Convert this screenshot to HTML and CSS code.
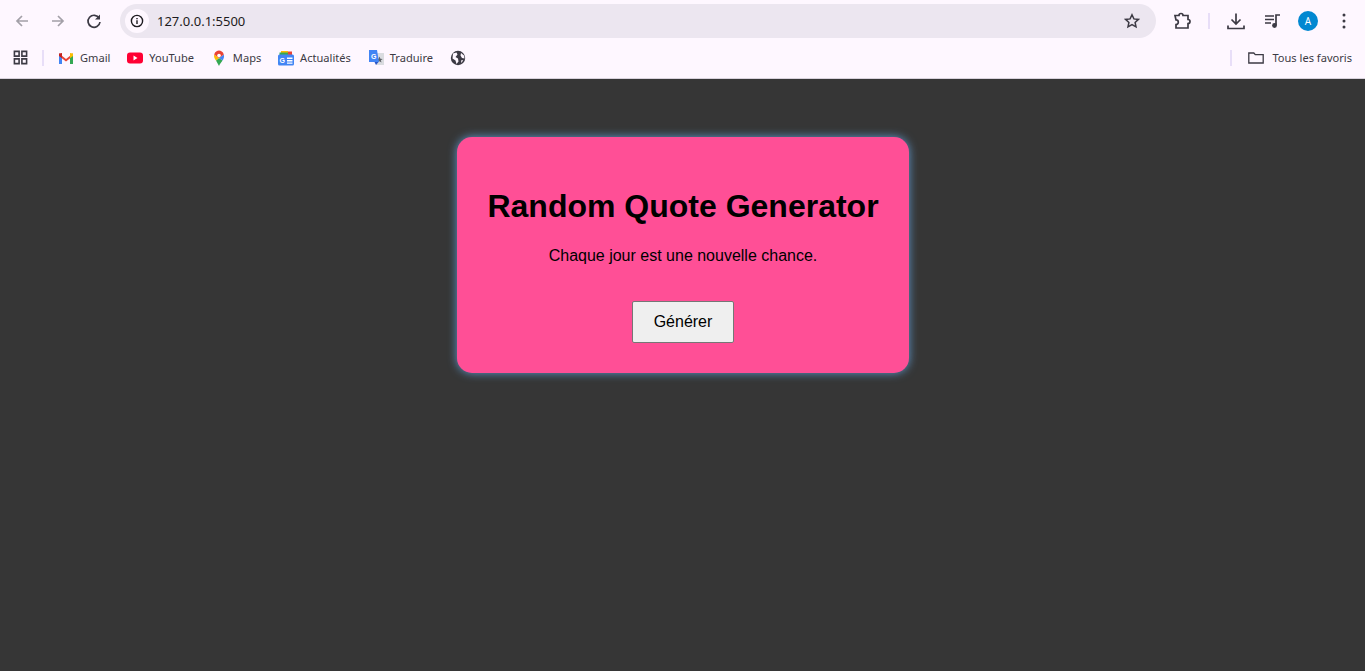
FILE: index.html
```html
<!DOCTYPE html>
<html lang="fr">
<head>
<meta charset="utf-8">
<title>Random Quote Generator</title>
<link rel="stylesheet" href="styles.css">
</head>
<body>
<header class="chrome">
  <div class="toolbar">
    <div class="nav">
      <svg class="ic dim" viewBox="0 0 16 16"><path d="M14 8H3M8 3 3 8l5 5"/></svg>
      <svg class="ic dim" viewBox="0 0 16 16"><path d="M2 8h11M8 3l5 5-5 5"/></svg>
      <svg class="ic" viewBox="0 0 16 16"><path d="M13.2 5.2A6 6 0 1 0 14 9"/><path class="fill" d="M14 1.5v5H9z"/></svg>
    </div>
    <div class="omnibox">
      <span class="site-info"><svg viewBox="0 0 14 14"><circle cx="7" cy="7" r="5.6"/><path d="M7 6.3v3.6M7 4v1.2"/></svg></span>
      <span class="url">127.0.0.1:5500</span>
      <svg class="star" viewBox="0 0 16 16"><path d="m8 1.8 1.9 4.1 4.5.5-3.3 3 .9 4.5L8 11.6l-4 2.3.9-4.5-3.3-3 4.5-.5z"/></svg>
    </div>
    <div class="actions">
      <svg class="ic puzzle" viewBox="0 0 18 18"><path d="M2 3.500h4a2 2 0 0 1 4 0h5v4a2 2 0 0 1 0 4v4.500H3v-3.500a2.300 2.300 0 0 0 0-4.600z"/></svg>
      <i class="sep"></i>
      <svg class="ic download" viewBox="0 0 18 18"><path d="M9 1.500v10M4.500 7.500 9 12l4.500-4.500M1 13.500v3h16v-3"/></svg>
      <svg class="ic media" viewBox="0 0 18 18"><path d="M1 4h9M1 7.500h9M1 11h6M12 13V3h4"/><circle class="fill" cx="10.500" cy="13.500" r="2.400"/></svg>
      <span class="avatar">A</span>
      <svg class="kebab" viewBox="0 0 4 16"><circle cx="2" cy="2" r="1.500"/><circle cx="2" cy="8" r="1.500"/><circle cx="2" cy="14" r="1.500"/></svg>
    </div>
  </div>
  <nav class="bookmarks">
    <svg class="apps" viewBox="0 0 16 16"><path d="M1.500 1.500h5v5h-5zM9.500 1.500h5v5h-5zM1.500 9.500h5v5h-5zM9.500 9.500h5v5h-5z"/></svg>
    <i class="sep first"></i>
    <a class="bm"><svg viewBox="0 0 16 16"><path fill="#ea4335" d="M1 3.500 8 9l7-5.500V6L8 11.500 1 6z"/><path fill="#4285f4" d="M1 3.500V14h3V6z"/><path fill="#34a853" d="M15 3.500V14h-3V6z"/><path fill="#fbbc04" d="M12 3l3 .5V6l-3 2.300z"/><path fill="#c5221f" d="M4 3 1 3.500V6l3 2.300z"/></svg>Gmail</a>
    <a class="bm"><svg viewBox="0 0 16 16"><rect y="2.500" width="16" height="11" rx="3" fill="#ff0033"/><path fill="#fff" d="m6.500 5.500 4 2.500-4 2.500z"/></svg>YouTube</a>
    <a class="bm"><svg viewBox="0 0 16 16"><path fill="#34a853" d="M5 10.500 8 16c1-2.500 2.500-3.700 3.500-5.500L8 8z"/><path fill="#fbbc04" d="M3.200 4.500C2.500 7 3.800 8.800 5 10.500L8 8z"/><path fill="#4285f4" d="M12.800 4.500 8 8l3.500 2.500c1.200-1.700 2-3.800 1.300-6z"/><path fill="#ea4335" d="M3.200 4.500 8 8l4.800-3.500C12 1.500 9.800.5 8 .5S4 1.500 3.200 4.500z"/><circle cx="8" cy="5.500" r="1.800" fill="#fff"/></svg>Maps</a>
    <a class="bm"><svg viewBox="0 0 16 16"><path fill="#fbbc04" d="M3 1h7v3H3z"/><path fill="#34a853" d="M1.500 2.500h9V6h-9z"/><path fill="#ea4335" d="M10 1.500h4V6h-4z"/><rect y="4.500" width="16" height="11" rx="1.500" fill="#4285f4"/><text class="gnews" x="1.500" y="13">G</text><path fill="#fff" d="M9 7.500h5.500v1.400H9zM9 10h5.500v1.400H9zM9 12.500h5.500v1.200H9z"/></svg>Actualités</a>
    <a class="bm"><svg viewBox="0 0 16 16"><path fill="#dadce0" d="M6 3h10v12H8z"/><path fill="#5f6368" d="m11.500 6.500.9 2.200 2.300.2-1.800 1.400.6 2.200-2-1.200-2 1.200.6-2.200-1.800-1.400 2.300-.2z"/><path fill="#4285f4" d="M1 0h8l2 12H1z"/><path fill="#2a56c6" d="m6.500 12 1.500 3 2.500-3z"/><text class="gnews" x="3" y="9">G</text></svg>Traduire</a>
    <a class="bm globe-only"><svg viewBox="0 0 16 16"><circle cx="8" cy="8" r="7.200" fill="#3c3a44"/><path fill="#fef7ff" d="M3 3.500 6.500 2.500l1 2-2 2.500 2.500 1.500.5 3-2 2.500-1-3.500-3-2zM11 3l3 2.500.5 3-2.500-.5-1.500-2.500zM11 10.500l2.200-.5-1.700 3z"/></svg></a>
    <i class="sep last"></i>
    <a class="bm folder"><svg viewBox="0 0 16 16"><path d="M.8 13V3h5l1.500 1.700h7.900V13z"/></svg>Tous les favoris</a>
  </nav>
</header>
<main class="page">
  <section class="card">
    <h1>Random Quote Generator</h1>
    <p>Chaque jour est une nouvelle chance.</p>
    <button type="button">Générer</button>
  </section>
</main>
</body>
</html>
```
FILE: styles.css
```css
* { box-sizing: border-box; }
html, body { height: 100%; }
body {
  margin: 0;
  display: flex;
  flex-direction: column;
  overflow: hidden;
  font-family: "Liberation Sans", Arial, sans-serif;
  background: #363636;
}
.chrome {
  height: 79px;
  flex: none;
  background: #fef7ff;
  font-family: "Noto Sans", sans-serif;
  color: #3c3a44;
}
.toolbar {
  height: 42px;
  display: flex;
  align-items: center;
}
.ic {
  width: 16px;
  height: 16px;
  fill: none;
  stroke: #3c3a44;
  stroke-width: 1.7;
  flex: none;
}
.ic .fill { fill: #3c3a44; stroke: none; }
.ic.dim { stroke: #a3a0a8; }
.nav {
  width: 120px;
  padding-left: 14px;
  display: flex;
  gap: 20px;
  flex: none;
}
.omnibox {
  width: 1036px;
  height: 34px;
  border-radius: 17px;
  background: #ece6f0;
  display: flex;
  align-items: center;
  padding: 0 16px 0 5px;
  flex: none;
}
.site-info {
  width: 24px;
  height: 24px;
  border-radius: 50%;
  background: #fef7ff;
  display: flex;
  align-items: center;
  justify-content: center;
}
.site-info svg {
  width: 14px;
  height: 14px;
  fill: none;
  stroke: #1d1b20;
  stroke-width: 1.4;
}
.url {
  margin-left: 8px;
  font-size: 13px;
  color: #1d1b20;
  flex: 1;
}
.star {
  width: 16px;
  height: 16px;
  fill: none;
  stroke: #3c3a44;
  stroke-width: 1.5;
}
.actions {
  flex: 1;
  display: flex;
  align-items: center;
  padding-left: 17px;
}
.puzzle { width: 18px; height: 18px; }
.sep {
  display: block;
  width: 2px;
  height: 16px;
  background: #e8def8;
  flex: none;
}
.actions .sep { margin: 0 17px 0 17px; }
.download { width: 18px; height: 18px; }
.media { width: 18px; height: 18px; margin-left: 19px; }
.avatar {
  width: 20px;
  height: 20px;
  margin-left: 16px;
  border-radius: 50%;
  background: #0288d1;
  color: #fff;
  font-size: 10px;
  display: flex;
  align-items: center;
  justify-content: center;
  flex: none;
}
.kebab {
  width: 4px;
  height: 16px;
  margin-left: 24px;
  fill: #3c3a44;
  flex: none;
}
.bookmarks {
  height: 37px;
  display: flex;
  align-items: center;
  padding: 0 13px 5px 13px;
  border-bottom: 1px solid #d8d2dc;
  font-size: 11.1px;
}
.apps {
  width: 15px;
  height: 15px;
  fill: none;
  stroke: #3c3a44;
  stroke-width: 1.7;
  flex: none;
}
.sep.first { margin: 0 14px 0 14px; }
.bm {
  display: flex;
  align-items: center;
  gap: 6px;
  margin-right: 16.8px;
  white-space: nowrap;
}
.bm svg { width: 16px; height: 16px; flex: none; }
.gnews {
  font-family: "Liberation Sans", sans-serif;
  font-weight: 700;
  font-size: 7px;
  fill: #fff;
}
.globe-only { flex: 1; margin-right: 0; }
.sep.last { margin-right: 16px; }
.folder { margin-right: 0; gap: 8px; }
.folder svg {
  fill: none;
  stroke: #3c3a44;
  stroke-width: 1.3;
}
.page {
  flex: 1;
  display: flex;
  justify-content: center;
  align-items: flex-start;
  padding-top: 58px;
}
.card {
  width: 452px;
  height: 236px;
  padding: 51px 20px 30px;
  border-radius: 15px;
  background: #ff4f96;
  box-shadow: 0 0 10px rgba(110, 185, 255, 0.75);
  text-align: center;
  margin-left: 1px;
}
h1 {
  margin: 0;
  font-size: 32px;
  line-height: 37px;
  font-weight: 700;
  color: #000;
}
p {
  margin: 22px 0 0;
  font-size: 16px;
  line-height: 18px;
  color: #000;
}
button {
  display: block;
  width: 102px;
  height: 42px;
  margin: 36px auto 0;
  background: #efefef;
  border: 1px solid #767676;
  border-radius: 2px;
  font-family: inherit;
  font-size: 16px;
  color: #000;
}
```
